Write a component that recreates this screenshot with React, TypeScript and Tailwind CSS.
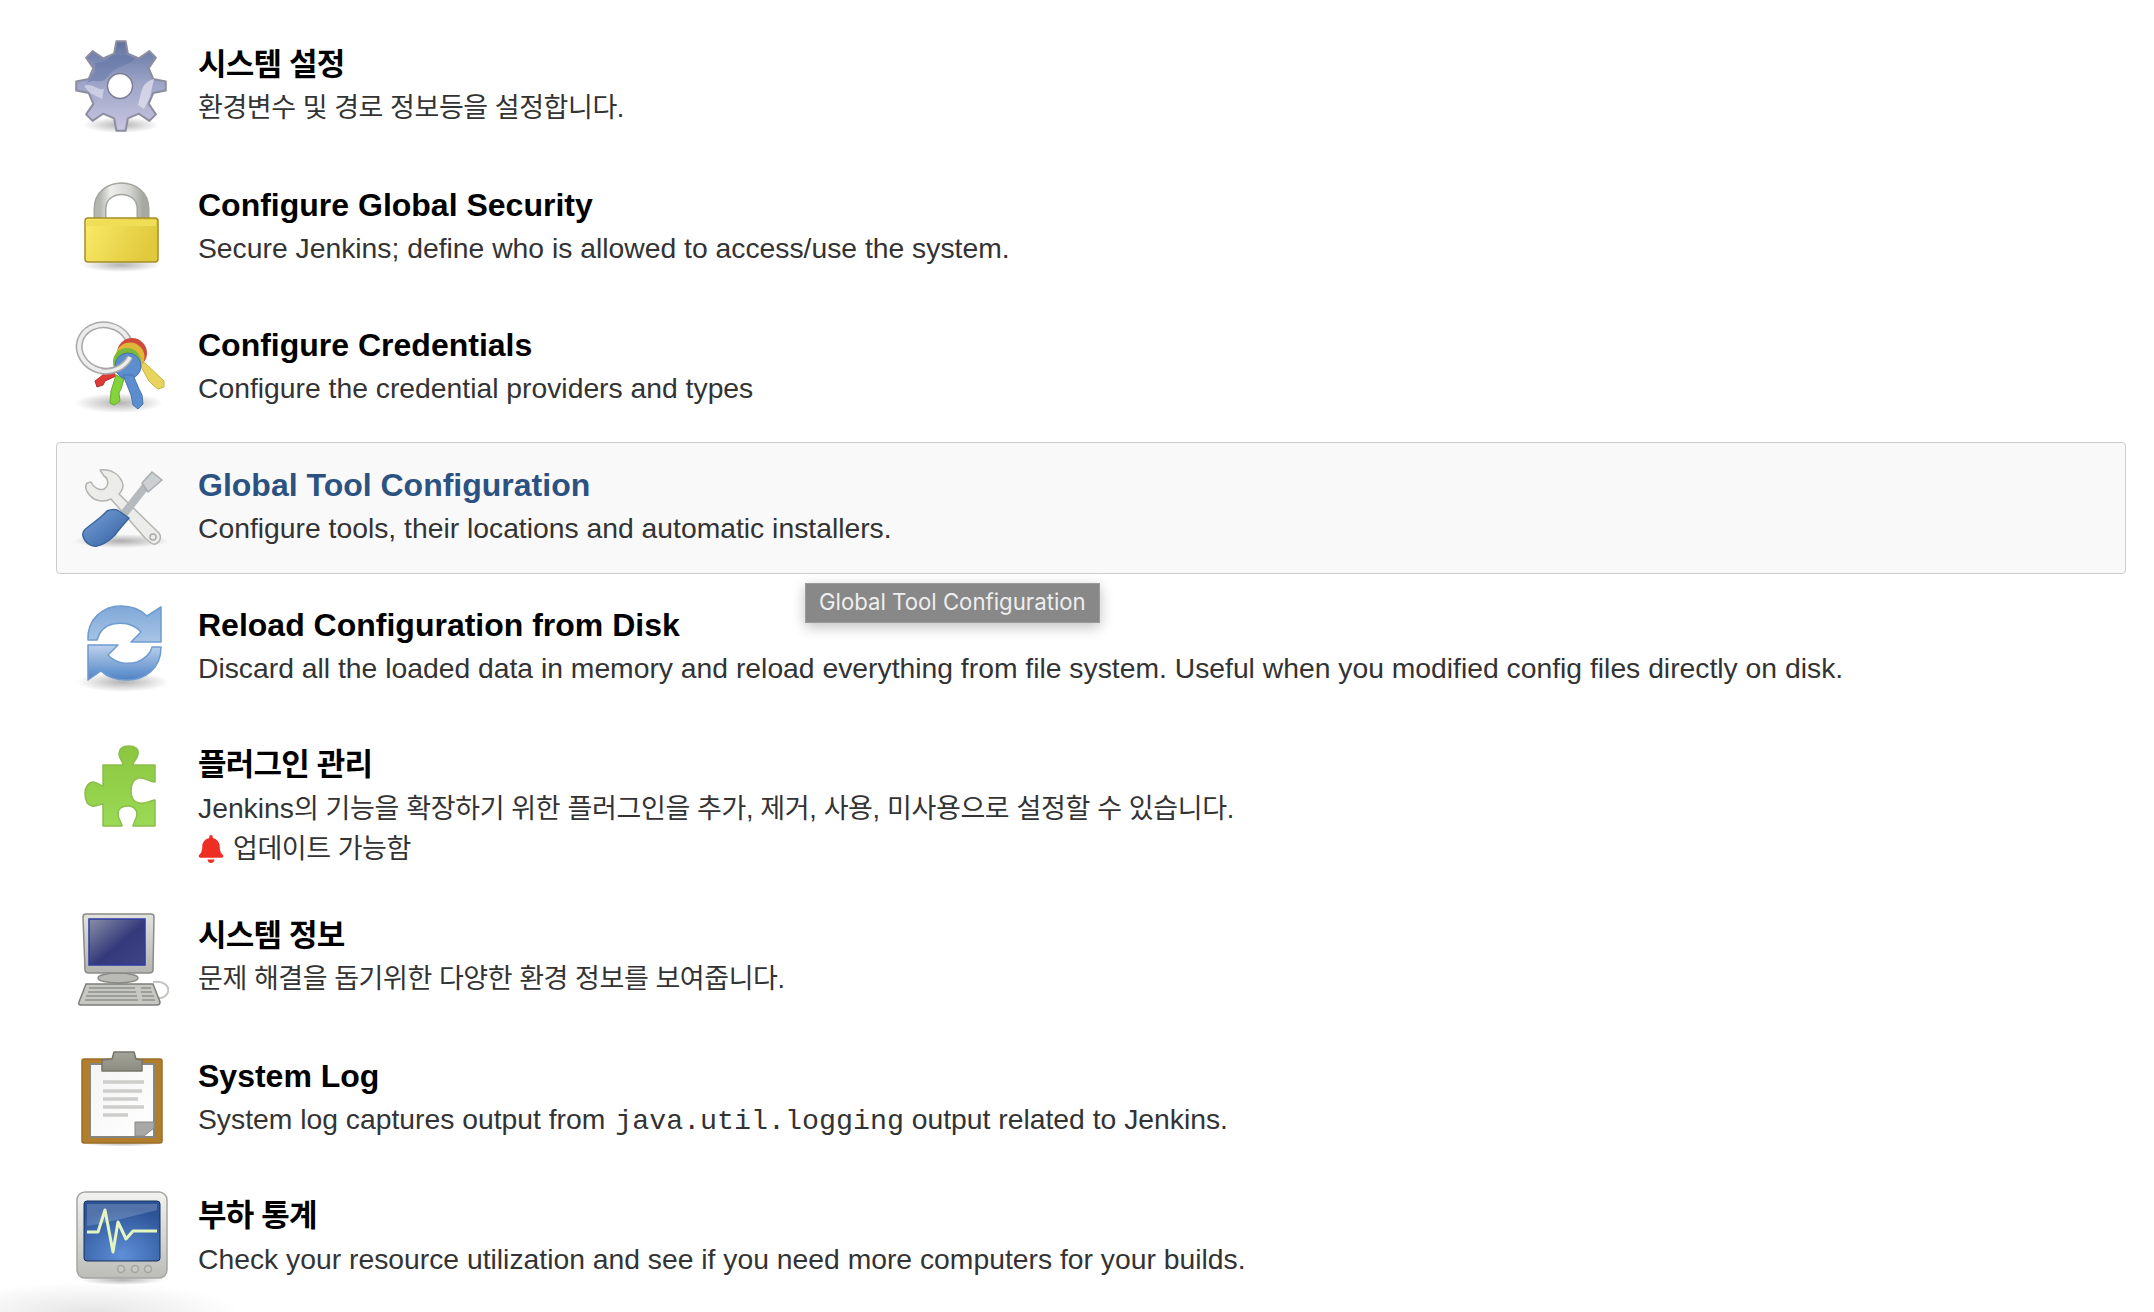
import type { ReactNode } from "react";
import { FaBell } from "react-icons/fa";

const gearPath = (() => {
  const pts: string[] = [];
  const teeth = 8;
  for (let i = 0; i < teeth; i++) {
    const a = (i / teeth) * Math.PI * 2 - Math.PI / 2;
    const step = (Math.PI * 2) / teeth;
    const p = (r: number, da: number) =>
      `${(48 + r * Math.cos(a + da)).toFixed(1)} ${(47 + r * Math.sin(a + da)).toFixed(1)}`;
    pts.push(i === 0 ? `M${p(33, -step * 0.27)}` : `L${p(33, -step * 0.27)}`);
    pts.push(`L${p(45, -step * 0.13)}`, `L${p(45, step * 0.13)}`, `L${p(33, step * 0.27)}`);
  }
  return pts.join(" ") + " Z";
})();

function Svg({ children }: { children: ReactNode }) {
  return (
    <svg width="96" height="96" viewBox="0 0 96 96" className="shrink-0 blur-[0.7px]">
      {children}
    </svg>
  );
}

function Shadow({ cx, cy, rx, ry, id }: { cx: number; cy: number; rx: number; ry: number; id: string }) {
  return (
    <>
      <defs>
        <radialGradient id={id}>
          <stop offset="0" stopColor="#000" stopOpacity="0.3" />
          <stop offset="1" stopColor="#000" stopOpacity="0" />
        </radialGradient>
      </defs>
      <ellipse cx={cx} cy={cy} rx={rx} ry={ry} fill={`url(#${id})`} />
    </>
  );
}

function GearIcon() {
  return (
    <Svg>
      <defs>
        <linearGradient id="gear-a" x1="0" y1="0" x2="0" y2="1">
          <stop offset="0" stopColor="#5f719f" />
          <stop offset="0.45" stopColor="#9ba3c6" />
          <stop offset="1" stopColor="#c9c6e0" />
        </linearGradient>
      </defs>
      <Shadow id="gear-s" cx={48} cy={86} rx={38} ry={8} />
      <path d={gearPath} fill="url(#gear-a)" stroke="#8d8da0" strokeWidth="2" strokeLinejoin="round" />
      <path d="M14 44 C24 38 28 48 36 36 C42 28 56 26 62 20 L54 16 L40 16 L32 22 L22 24 L22 32 Z" fill="#5f73a6" opacity="0.5" />
      <path d="M65 66 C69 54 67 44 81 40 L77 58 L71 70 Z" fill="#e6e4f2" opacity="0.7" />
      <path d="M11 47 C19 43 25 52 31 50 L29 60 L17 54 Z" fill="#dcdcee" opacity="0.7" />
      <circle cx="47" cy="47" r="12.5" fill="#fff" stroke="#7b7d93" strokeWidth="1.5" />
    </Svg>
  );
}

function LockIcon() {
  return (
    <Svg>
      <defs>
        <linearGradient id="lock-a" x1="0" y1="0" x2="1" y2="0.3">
          <stop offset="0" stopColor="#fbeb6a" />
          <stop offset="1" stopColor="#e0c93c" />
        </linearGradient>
        <linearGradient id="lock-b" x1="0" y1="0" x2="1" y2="0">
          <stop offset="0" stopColor="#b4b6b0" />
          <stop offset="0.25" stopColor="#eeeeec" />
          <stop offset="0.7" stopColor="#d4d5d0" />
          <stop offset="1" stopColor="#a6a8a2" />
        </linearGradient>
      </defs>
      <Shadow id="lock-s" cx={48} cy={86} rx={40} ry={7} />
      <path d="M27 40 L27 30 C27 3 70 3 70 30 L70 40" fill="none" stroke="#a2a49e" strokeWidth="13" />
      <path d="M27 40 L27 30 C27 3 70 3 70 30 L70 40" fill="none" stroke="url(#lock-b)" strokeWidth="10" />
      <rect x="12" y="39" width="73" height="44" rx="3" fill="url(#lock-a)" stroke="#a68f26" strokeWidth="1.5" />
      <rect x="14" y="41" width="69" height="6" fill="#f1de57" />
    </Svg>
  );
}

function KeysIcon() {
  return (
    <Svg>
      <Shadow id="keys-s" cx={46} cy={84} rx={44} ry={10} />
      <ellipse cx="32" cy="29" rx="26" ry="23" transform="rotate(15 32 29)" fill="none" stroke="#a8a8a8" strokeWidth="7" />
      <ellipse cx="32" cy="29" rx="26" ry="23" transform="rotate(15 32 29)" fill="none" stroke="#ececec" strokeWidth="4" />
      <path d="M66 44 L72 44 L91 62 L91 68 L85 70 L80 66 L76 62 Z" fill="#e8d45c" stroke="#c9b440" strokeLinejoin="round" />
      <path d="M38 50 L43 57 L32 62 L30 66 L24 68 L22 62 Z" fill="#df3a34" stroke="#b52a26" strokeLinejoin="round" />
      <circle cx="59" cy="34" r="15" fill="#cf4a3c" />
      <circle cx="57" cy="38" r="14.5" fill="#e0b63a" />
      <circle cx="54" cy="43" r="14" fill="#7cb83a" />
      <path d="M43 56 L51 60 L48 70 L46 74 L47 82 L41 86 L37 84 L38 72 Z" fill="#84d23c" stroke="#69ad2c" strokeLinejoin="round" />
      <circle cx="55" cy="47" r="13" fill="#5c8ecf" stroke="#4774ad" />
      <path d="M50 56 L60 56 L66 70 L69 76 L70 85 L65 90 L60 86 L58 76 Z" fill="#5c8ecf" stroke="#4774ad" strokeLinejoin="round" />
      <path d="M28 52 C40 54 52 48 57 38" fill="none" stroke="#a8a8a8" strokeWidth="6.5" />
      <path d="M28 52 C40 54 52 48 57 38" fill="none" stroke="#ececec" strokeWidth="3.5" />
    </Svg>
  );
}

function ToolsIcon() {
  return (
    <Svg>
      <defs>
        <linearGradient id="tools-a" x1="0" y1="0" x2="1" y2="1">
          <stop offset="0" stopColor="#7aa3d8" />
          <stop offset="1" stopColor="#2f5d9f" />
        </linearGradient>
      </defs>
      <Shadow id="tools-s" cx={48} cy={82} rx={48} ry={7} />
      <path
        d="M27 11 C38 9 48 16 50 26 C50 30 48 33 46 35 L86 74 C90 80 84 88 78 84 L72 79 L38 40 C30 44 20 42 15 34 C12 30 12 27 14 24 L18 23 C20 28 26 32 31 30 C36 27 36 20 31 17 L27 11 Z"
        fill="#ececea"
        stroke="#b4b5b1"
        strokeWidth="1.5"
        strokeLinejoin="round"
      />
      <circle cx="80" cy="78" r="3" fill="none" stroke="#aaa" strokeWidth="1.5" />
      <path d="M50 56 L72 28" stroke="#b6babd" strokeWidth="8" />
      <path d="M69 24 L79 13 L89 21 L75 33 Z" fill="#cdd0d2" stroke="#a9acae" strokeWidth="1.5" strokeLinejoin="round" />
      <path
        d="M34 52 C38 50 44 50 46 52 L56 59 C52 64 46 70 42 76 C36 82 30 86 24 87 C18 88 12 84 10 77 C9 73 12 70 15 68 C20 64 26 60 30 56 Z"
        fill="url(#tools-a)"
        stroke="#3c659d"
        strokeWidth="1.5"
        strokeLinejoin="round"
      />
    </Svg>
  );
}

function ReloadIcon() {
  return (
    <Svg>
      <defs>
        <linearGradient id="reload-a" x1="0" y1="0" x2="0" y2="1">
          <stop offset="0" stopColor="#7fa8d8" />
          <stop offset="1" stopColor="#a8c4e6" />
        </linearGradient>
        <linearGradient id="reload-b" x1="0" y1="0" x2="0" y2="1">
          <stop offset="0" stopColor="#bcd2ec" />
          <stop offset="1" stopColor="#4f83c6" />
        </linearGradient>
      </defs>
      <Shadow id="reload-s" cx={50} cy={83} rx={46} ry={10} />
      <path
        d="M15 41 C14 20 30 7 48 7 C60 7 68 11 74 17 L88 8 L88 43 L58 43 L68 33 C60 24 50 23 40 25 C30 27 26 34 24 41 Z"
        fill="url(#reload-a)"
        stroke="#6f9bd0"
        strokeWidth="1.5"
        strokeLinejoin="round"
      />
      <path
        d="M88 48 C88 70 72 81 54 81 C42 81 34 78 28 72 L15 81 L15 46 L45 46 L35 56 C42 64 54 66 64 63 C72 60 78 54 79 48 Z"
        fill="url(#reload-b)"
        stroke="#6f9bd0"
        strokeWidth="1.5"
        strokeLinejoin="round"
      />
    </Svg>
  );
}

function PuzzleIcon() {
  return (
    <Svg>
      <defs>
        <linearGradient id="puzzle-a" x1="0" y1="0" x2="0" y2="1">
          <stop offset="0" stopColor="#8cc63f" />
          <stop offset="1" stopColor="#9ada55" />
        </linearGradient>
      </defs>
      <path
        d="M30 26 L50 26 C50 22 46 20 46 15 C46 9 51 7 56 7 C62 7 66 10 65 15 C65 20 60 22 60 26 L82 26 L82 43 C76 43 72 38 66 39 C60 40 58 46 58 52 C58 58 60 63 66 64 C72 65 76 62 82 61 L82 87 L60 87 C60 84 64 80 64 75 C64 70 60 67 55 67 C49 67 45 70 45 75 C45 80 49 84 49 87 L30 87 L30 65 C26 65 24 68 19 67 C14 66 12 60 12 54 C12 48 16 43 20 43 C25 43 27 47 30 47 Z"
        fill="url(#puzzle-a)"
        stroke="#8bbd4c"
        strokeWidth="1.5"
        strokeLinejoin="round"
      />
    </Svg>
  );
}

function ComputerIcon() {
  return (
    <Svg>
      <defs>
        <linearGradient id="comp-a" x1="0" y1="0" x2="1" y2="1">
          <stop offset="0" stopColor="#8a8fa8" />
          <stop offset="0.55" stopColor="#33397a" />
          <stop offset="1" stopColor="#3f4688" />
        </linearGradient>
        <linearGradient id="comp-b" x1="0" y1="0" x2="0" y2="1">
          <stop offset="0" stopColor="#e2e2de" />
          <stop offset="1" stopColor="#b4b5b0" />
        </linearGradient>
      </defs>
      <path d="M80 72 C92 70 98 78 94 84 C90 90 84 88 80 86" fill="none" stroke="#c4c4c0" strokeWidth="2" />
      <ellipse cx="45" cy="68" rx="20" ry="5" fill="#b9bab5" stroke="#8a8b87" strokeWidth="1.5" />
      <path d="M13 4 L78 4 C80 4 81 5 81 7 L80 60 C80 62 78 63 76 63 L16 63 C13 63 12 62 12 60 L10 7 C10 5 11 4 13 4 Z" fill="url(#comp-b)" stroke="#8a8b87" strokeWidth="1.5" />
      <rect x="16" y="9" width="56" height="46" fill="url(#comp-a)" stroke="#2f3aa0" strokeWidth="1.5" />
      <path d="M13 74 L80 74 L87 92 C87 94 86 95 84 95 L8 95 C6 95 5 94 6 92 Z" fill="#c7c8c3" stroke="#7d7e7a" strokeWidth="1.5" />
      <path d="M16 78 L62 78 M15 82 L63 82 M13 86 L64 86 M12 90 L65 90" stroke="#8f908c" strokeWidth="1.5" />
      <path d="M68 78 L78 78 M68 82 L79 82 M69 86 L81 86 M69 90 L82 90" stroke="#8f908c" strokeWidth="1.5" />
    </Svg>
  );
}

function ClipboardIcon() {
  return (
    <Svg>
      <defs>
        <linearGradient id="clip-a" x1="0" y1="0" x2="1" y2="1">
          <stop offset="0" stopColor="#f4f4f4" />
          <stop offset="1" stopColor="#ffffff" />
        </linearGradient>
        <linearGradient id="clip-b" x1="0" y1="0" x2="0" y2="1">
          <stop offset="0" stopColor="#a4a49a" />
          <stop offset="1" stopColor="#8b8b7f" />
        </linearGradient>
      </defs>
      <g transform="translate(-1 0)">
        <Shadow id="clip-s" cx={50} cy={93} rx={40} ry={4} />
        <rect x="10" y="9" width="80" height="84" rx="2" fill="#b27e2c" stroke="#9a6d28" strokeWidth="1.5" />
        <rect x="18" y="14" width="64" height="73" fill="url(#clip-a)" stroke="#858582" strokeWidth="2" />
        <path d="M31 32 H72 M31 41 H70 M31 49 H66 M31 57 H72 M31 65 H56" stroke="#cdcdcb" strokeWidth="3.5" />
        <path d="M63 86 L63 72 L82 72 L82 78 L72 86 Z" fill="#a8a8a6" stroke="#898987" strokeWidth="1" />
        <path d="M42 2 L62 2 L64 9 L70 10 L70 21 L30 21 L30 10 L40 9 Z" fill="url(#clip-b)" stroke="#75756b" strokeWidth="1.5" strokeLinejoin="round" />
      </g>
    </Svg>
  );
}

function MonitorIcon() {
  return (
    <Svg>
      <defs>
        <linearGradient id="mon-a" x1="0" y1="0" x2="0" y2="1">
          <stop offset="0" stopColor="#f2f2f0" />
          <stop offset="1" stopColor="#bcbdb8" />
        </linearGradient>
        <radialGradient id="mon-b" cx="0.5" cy="0.9" r="0.8">
          <stop offset="0" stopColor="#5e8fd8" />
          <stop offset="1" stopColor="#2c5396" />
        </radialGradient>
      </defs>
      <g transform="translate(-1 0)">
        <Shadow id="mon-s" cx={50} cy={90} rx={42} ry={5} />
        <rect x="5" y="2" width="90" height="86" rx="8" fill="url(#mon-a)" stroke="#a5a6a2" strokeWidth="1.5" />
        <rect x="12" y="11" width="76" height="60" rx="3" fill="url(#mon-b)" stroke="#17305f" strokeWidth="1" />
        <path d="M15 14 H85 V20 C60 26 40 32 15 36 Z" fill="#fff" opacity="0.18" />
        <path d="M15 42 H26 L33 20 L41 62 L46 32 L54 49 L61 41 H85" fill="none" stroke="#e4f5c0" strokeWidth="3" strokeLinejoin="round" />
        <circle cx="49" cy="79" r="3.5" fill="#c8c8c4" stroke="#a5a59d" strokeWidth="1.5" />
        <circle cx="63" cy="79" r="3.5" fill="#c8c8c4" stroke="#a5a59d" strokeWidth="1.5" />
        <circle cx="76" cy="79" r="3.5" fill="#c8c8c4" stroke="#a5a59d" strokeWidth="1.5" />
      </g>
    </Svg>
  );
}

const titleKo = "text-[31px] tracking-[-0.8px]";
const descKo = "text-[27px] tracking-[-0.43px]";

function Row({
  icon,
  title,
  hovered,
  ko,
  children,
}: {
  icon: ReactNode;
  title: string;
  hovered?: boolean;
  ko?: boolean;
  children: ReactNode;
}) {
  return (
    <div
      className={`flex min-h-[132px] rounded-[4px] border-[1.5px] pl-[16px] ${
        hovered ? "border-[#cccccc] bg-[#f9f9f9]" : "border-transparent"
      }`}
    >
      <div className="mt-[16px] h-[96px] w-[96px] shrink-0">{icon}</div>
      <div className="pt-[19px] pl-[29px]">
        <div
          className={`leading-[46px] font-bold ${ko ? titleKo : "text-[32px]"} ${
            hovered ? "text-[#2c5282]" : "text-black"
          }`}
        >
          {title}
        </div>
        <div className={`leading-[40px] text-[#333333] ${ko ? descKo : "text-[28.3px]"}`}>{children}</div>
      </div>
    </div>
  );
}

export default function App() {
  return (
    <div className="relative h-[1312px] overflow-hidden bg-white font-['Liberation_Sans','Noto_Sans_CJK_KR',sans-serif]">
      <div className="flex flex-col gap-2 pt-[22px] pr-[28px] pl-[56px]">
        <Row icon={<GearIcon />} title="시스템 설정" ko>
          환경변수 및 경로 정보등을 설정합니다.
        </Row>
        <Row icon={<LockIcon />} title="Configure Global Security">
          Secure Jenkins; define who is allowed to access/use the system.
        </Row>
        <Row icon={<KeysIcon />} title="Configure Credentials">
          Configure the credential providers and types
        </Row>
        <Row icon={<ToolsIcon />} title="Global Tool Configuration" hovered>
          Configure tools, their locations and automatic installers.
        </Row>
        <Row icon={<ReloadIcon />} title="Reload Configuration from Disk">
          Discard all the loaded data in memory and reload everything from file system. Useful when you modified config files directly on disk.
        </Row>
        <Row icon={<PuzzleIcon />} title="플러그인 관리" ko>
          <span className="text-[28.3px] tracking-normal">Jenkins</span>
          <span className="tracking-[-0.35px]">의 기능을 확장하기 위한 플러그인을 추가, 제거, 사용, 미사용으로 설정할 수 있습니다.</span>
          <div className="flex items-center pb-[15px]">
            <FaBell className="mr-[9px] h-[28px] w-[26px] text-[#ee2e24]" />
            업데이트 가능함
          </div>
        </Row>
        <Row icon={<ComputerIcon />} title="시스템 정보" ko>
          문제 해결을 돕기위한 다양한 환경 정보를 보여줍니다.
        </Row>
        <Row icon={<ClipboardIcon />} title="System Log">
          System log captures output from <code className="ml-[2px] font-['Liberation_Mono',monospace] text-[28.3px]">java.util.logging</code> output related to Jenkins.
        </Row>
        <Row icon={<MonitorIcon />} title="부하 통계" ko>
          <span className="text-[28.3px] tracking-normal">Check your resource utilization and see if you need more computers for your builds.</span>
        </Row>
      </div>
      <div className="absolute top-[583px] left-[805px] border-[1.5px] border-[#9a9a9a] bg-[#888888] px-[13px] pt-[1px] pb-[3px] font-['Inter',sans-serif] text-[22.2px] leading-[34px] text-[#eeeeee] shadow-[0_4px_14px_rgba(0,0,0,0.25)]">
        Global Tool Configuration
      </div>
      <div className="absolute bottom-[-30px] left-[-60px] h-[60px] w-[300px] bg-[radial-gradient(closest-side,rgba(0,0,0,0.1),rgba(0,0,0,0))]" />
    </div>
  );
}
